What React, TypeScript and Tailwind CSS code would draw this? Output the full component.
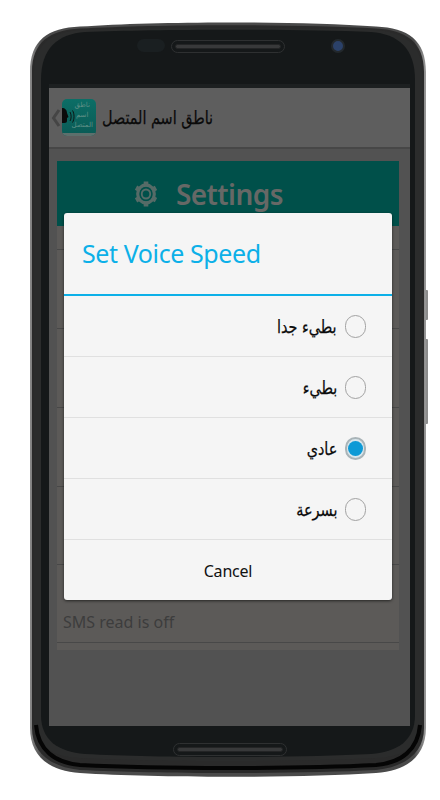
import React from 'react';

const arabic = { fontFamily: '"DejaVu Sans", "Noto Sans", sans-serif' };
const latin = { fontFamily: '"Noto Sans", sans-serif' };

const Gear = () => (
  <svg width="24" height="28" viewBox="0 0 26 28" fill="none" preserveAspectRatio="none">
    <g stroke="#566b67" strokeWidth="5">
      <path d="M13 1.500v25M2.200 7.700l21.600 12.500M2.200 20.300l21.600-12.500" strokeDasharray="5 15" />
    </g>
    <circle cx="13" cy="14" r="9" stroke="#566b67" strokeWidth="3.400" />
    <circle cx="13" cy="14" r="4.600" stroke="#566b67" strokeWidth="2" />
  </svg>
);

const AppIcon = () => (
  <div className="relative w-[34px] h-[37px] rounded-[5px] overflow-hidden bg-gradient-to-b from-[#0c6e66] to-[#0a5a55] shrink-0">
    <div className="absolute top-[1px] right-[3px] flex flex-col items-center text-[7px] leading-[10px] text-[#5f8f86]" style={arabic}>
      <span>ناطق</span>
      <span>اسم</span>
      <span>المتصل</span>
    </div>
    <svg className="absolute left-0 top-[8px]" width="14" height="20" viewBox="0 0 14 20" fill="none">
      <path d="M0 1c3 0 5 2 5 5l1.500 4-1.500 1v3c0 2-2 2-5 2z" fill="#0b0b0b" />
      <path d="M8 5c1.500 2.500 1.500 7 0 9M10.500 3.500c2 3 2 9 0 12" stroke="#0b0b0b" strokeWidth="0.9" />
    </svg>
    <div className="absolute bottom-0 left-0 right-0 h-[3px] bg-[#5d6f6c]" />
  </div>
);

const SpeedOption = ({ label, checked }: { label: string; checked?: boolean }) => (
  <div className="h-[61px] flex items-center justify-end gap-2 pr-[26px] border-b border-[#e0e0e0] text-[#0a0a0a] text-[18px]" style={arabic}>
    <span className="scale-x-[0.8] origin-right [-webkit-text-stroke:0.25px_#0a0a0a]">{label}</span>
    {checked ? (
      <div className="w-[21px] h-[23px] rounded-full border-2 border-[#a9b4b8] bg-[#d8e6ec] flex items-center justify-center">
        <div className="w-[15px] h-[15px] rounded-full bg-[#0d9ad6]" />
      </div>
    ) : (
      <div className="w-[21px] h-[23px] rounded-full border-[1.5px] border-[#a2a2a2]" />
    )}
  </div>
);

const Speaker = () => (
  <div className="w-[114px] h-[13px] rounded-full border border-[#2e3031] p-[3px]">
    <div className="h-full rounded-full bg-[#38393a] border border-[#232425]" />
  </div>
);

export default function App() {
  return (
    <div className="relative w-[440px] h-[800px] bg-white overflow-hidden">
      {/* phone body */}
      <svg className="absolute left-0 top-0" width="440" height="800" viewBox="0 0 440 800" fill="none">
        <defs>
          <linearGradient id="edge" x1="0" y1="0" x2="1" y2="0">
            <stop offset="0" stopColor="#8a8a8a" />
            <stop offset="0.03" stopColor="#4a4a4a" />
            <stop offset="0.97" stopColor="#4a4a4a" />
            <stop offset="1" stopColor="#9a9a9a" />
          </linearGradient>
        </defs>
        <rect x="423" y="290" width="5" height="30" rx="1" fill="#8c8c8c" />
        <rect x="423" y="339" width="5" height="85" rx="1" fill="#8c8c8c" />
        <path d="M30 72C30 40 48 28 80 26.500C160 21 296 21 376 26.500C408 28 426 40 426 72V728C426 755 408 771 376 773C296 778 160 778 80 773C48 771 30 755 30 728Z" fill="url(#edge)" />
        <path d="M32 72C32 42 50 30 80 28.500C160 24 296 24 376 28.500C406 30 424 42 424 72V728C424 752 406 767 376 770C296 774 160 774 80 770C50 767 32 752 32 728Z" fill="#2a2a2a" />
        <path d="M34 72C34 44 52 32 80 30C160 27 296 27 376 30C404 32 422 44 422 72V720C422 746 404 757 376 758C296 762 160 762 80 758C52 757 34 746 34 720Z" fill="#2b2c2c" />
        <path d="M41 80C41 48 58 34 85 32C160 29 296 29 371 32C398 34 415 48 415 80V715C415 740 398 752 371 754C296 758 160 758 85 754C58 752 41 740 41 715Z" fill="#151819" />
        <path d="M36 725C38 750 55 763 80 765C160 769 296 769 376 765C401 763 418 750 420 725" stroke="#050505" strokeWidth="4" />
      </svg>

      <div className="absolute left-[49px] top-0 w-[361px]">
        <div className="relative h-[84px]">
          <div className="absolute left-[88px] top-[39px] w-[28px] h-[13px] rounded-full bg-[#1a1f21]" />
          <div className="absolute left-[122px] top-[40px]">
            <Speaker />
          </div>
          <div className="absolute left-[282px] top-[39px] w-[14px] h-[14px] rounded-full bg-[#2b4169] border-2 border-[#23282c]" />
        </div>

        {/* dimmed app screen */}
        <div className="h-[642px] bg-[#525252] border-t-4 border-[#1d2021] flex flex-col">
          <div className="h-[61px] bg-[#5e5e5e] border-b-2 border-[#474747] flex items-center pl-[1px] shrink-0">
            <svg width="12" height="20" viewBox="0 0 12 20" fill="none">
              <path d="M9 2L3.500 10 9 18" stroke="#454545" strokeWidth="3" />
            </svg>
            <AppIcon />
            <span className="ml-[6px] text-[18px] text-[#0a0a0a] scale-x-[0.8] origin-left [-webkit-text-stroke:0.25px_#0a0a0a]" style={arabic}>ناطق اسم المتصل</span>
          </div>

          <div className="ml-[8px] mr-[11px] mt-[12px] h-[489px] bg-[#5c5a58] flex flex-col">
            <div className="h-[65px] bg-[#00504a] flex items-center gap-[18px] pl-[77px] shrink-0">
              <Gear />
              <span className="text-[28px] font-semibold tracking-[-0.6px] text-[#666866]" style={latin}>Settings</span>
            </div>
            <div className="h-[24px] border-b border-[#484848]" />
            <div className="h-[79px] border-b border-[#484848]" />
            <div className="h-[79px] border-b border-[#484848]" />
            <div className="h-[79px] border-b border-[#484848]" />
            <div className="h-[78px] border-b border-[#484848]" />
            <div className="h-[78px] border-b border-[#484848] relative px-[6px] pt-[43px] text-[16px] leading-[28px] text-[#3d3d3d]" style={latin}>
              <div className="absolute right-[11px] top-0 w-[23px] h-[17px] bg-[#1c3d1c]" />
              SMS read is off
            </div>
          </div>
        </div>

        <div className="h-[52px] flex items-start justify-center pt-[17px]">
          <Speaker />
        </div>
      </div>

      {/* dialog */}
      <div className="absolute left-[64px] top-[213px] w-[328px] bg-[#f5f5f5] rounded-[3px] shadow-[0_1px_3px_rgba(0,0,0,0.6)]">
        <div className="h-[81px] flex items-center pl-[18px] text-[25px] tracking-[-0.4px] text-[#0cb0e8]" style={latin}>
          Set Voice Speed
        </div>
        <div className="h-[2px] bg-[#0cb0e8]" />
        <SpeedOption label="بطيء جدا" />
        <SpeedOption label="بطيء" />
        <SpeedOption checked label="عادي" />
        <SpeedOption label="بسرعة" />
        <div className="h-[60px] flex items-center justify-center pt-[1px] text-[16px] tracking-[-0.2px] text-[#111]" style={latin}>
          Cancel
        </div>
      </div>
    </div>
  );
}
